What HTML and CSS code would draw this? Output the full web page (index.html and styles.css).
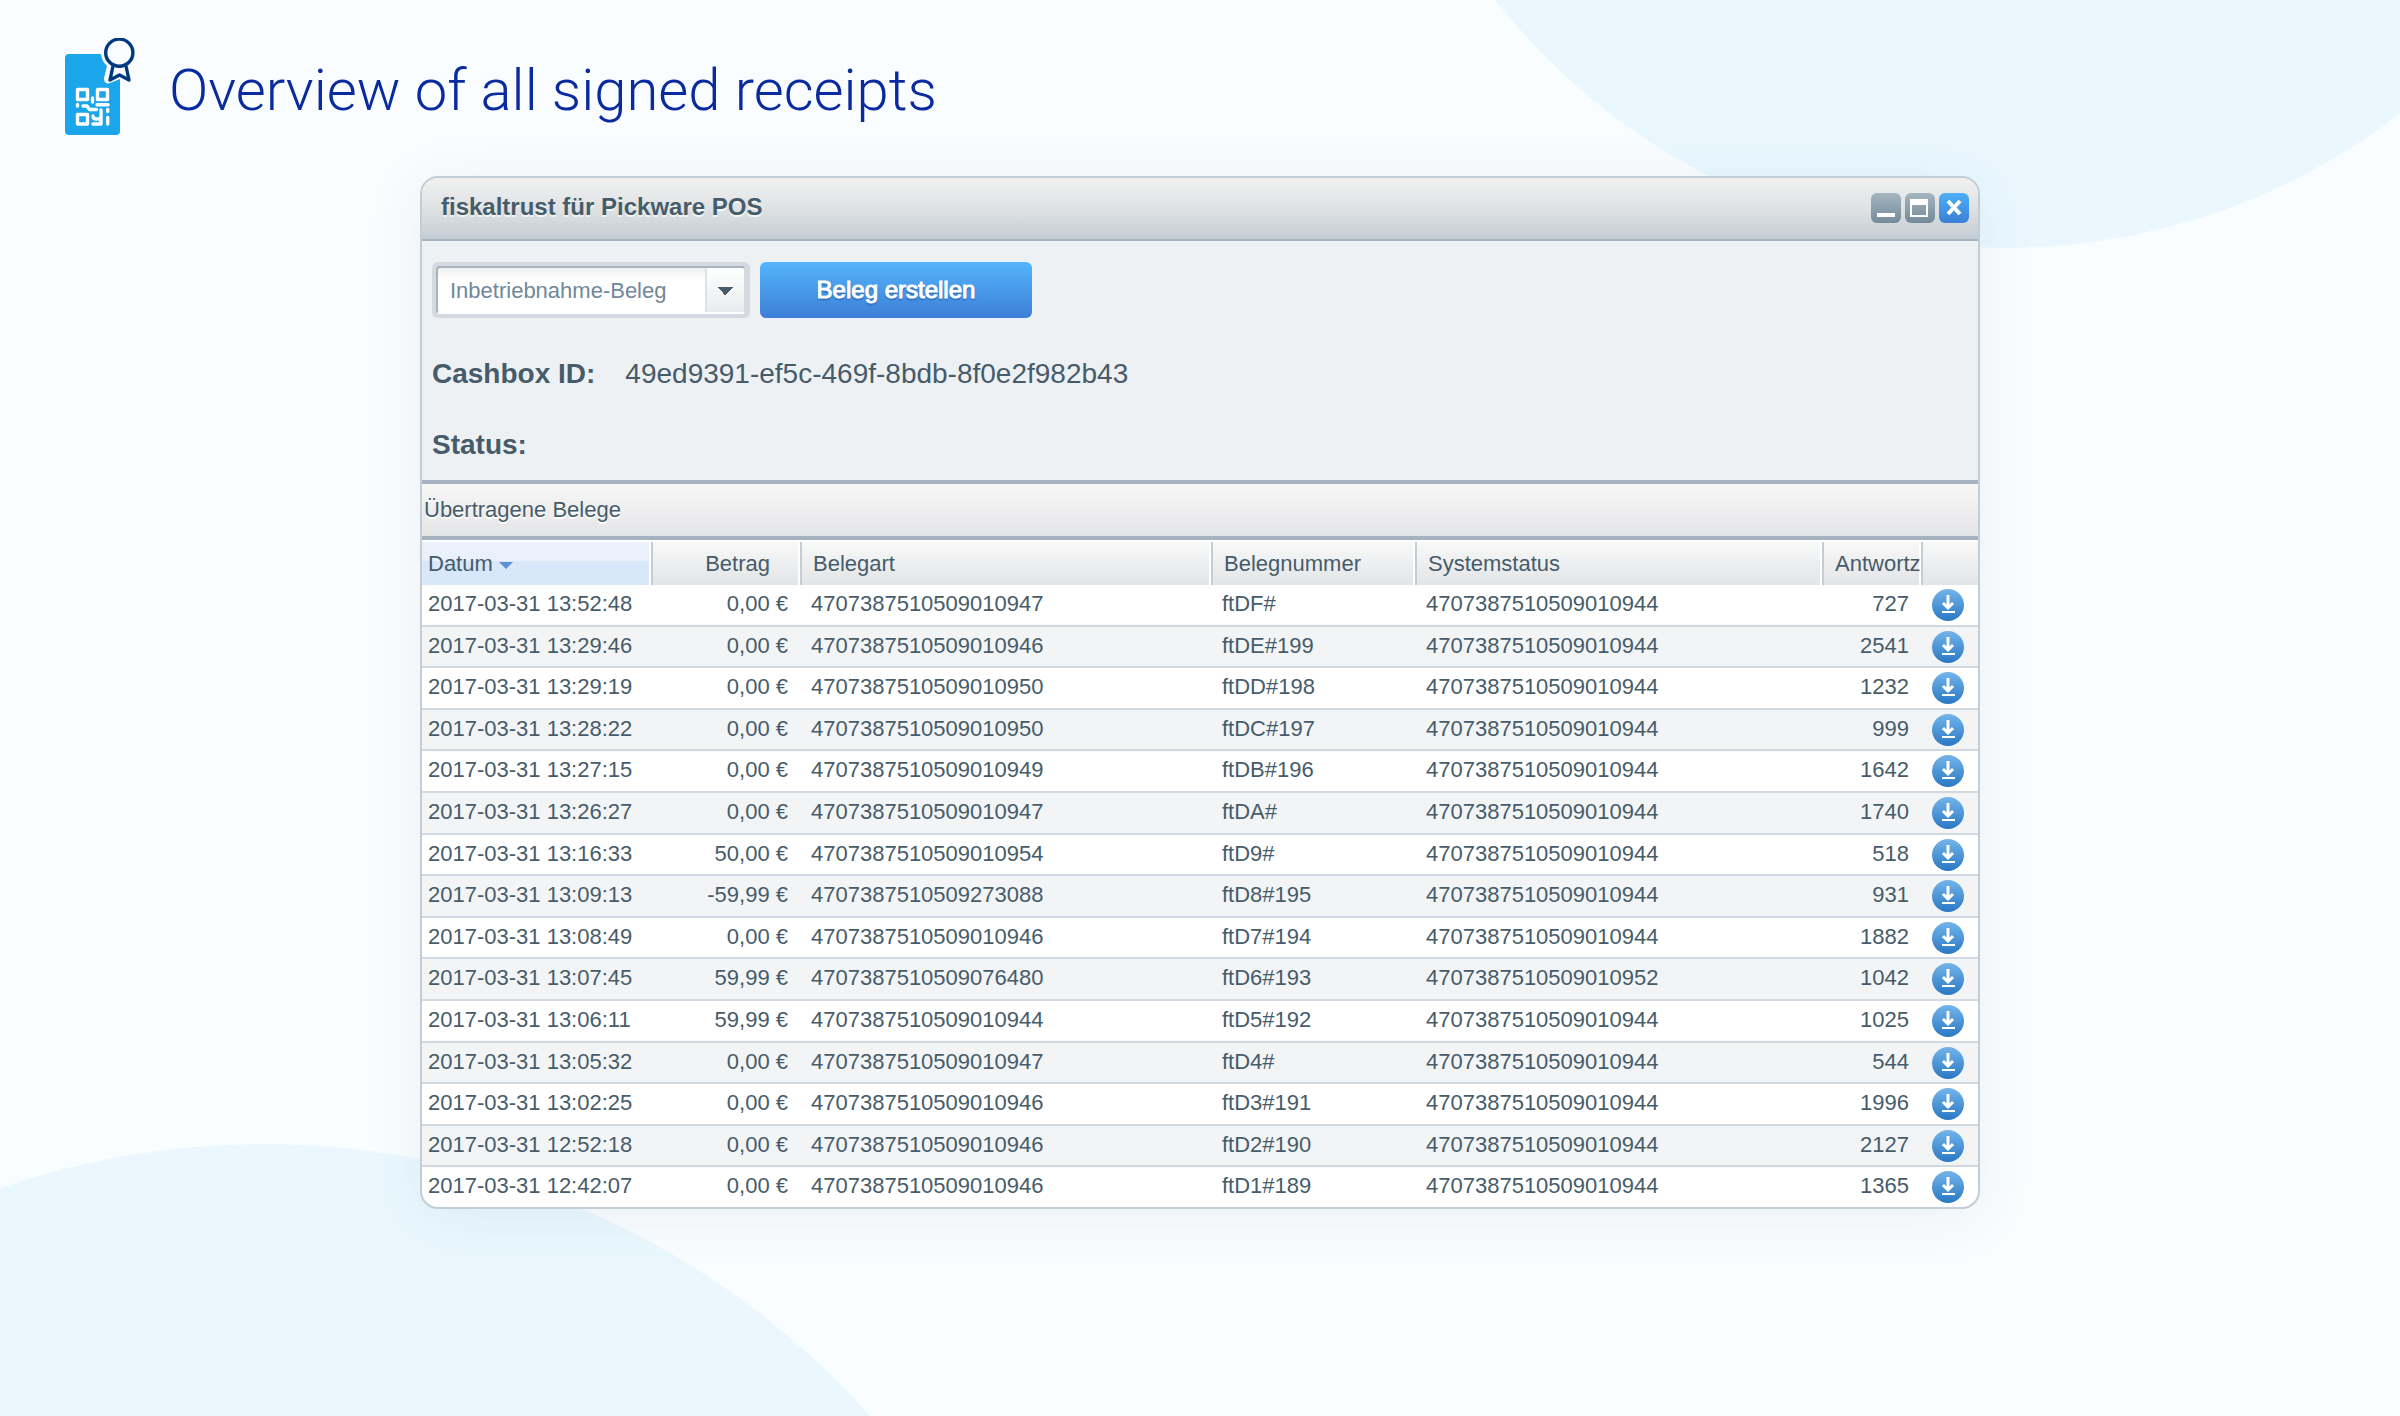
FILE: index.html
```html
<!DOCTYPE html>
<html lang="en">
<head>
<meta charset="utf-8">
<title>Overview of all signed receipts</title>
<link rel="stylesheet" href="styles.css">
</head>
<body>
<div class="backdrop" aria-hidden="true"><span class="blob blob-top"></span><span class="blob blob-bottom"></span></div>
<svg class="sprite" aria-hidden="true">
  <linearGradient id="disc" x1="0" y1="0" x2="0" y2="1"><stop offset="0" stop-color="#73b5ea"/><stop offset="1" stop-color="#2a78c4"/></linearGradient>
  <symbol id="download" viewBox="0 0 32 32">
    <circle cx="16" cy="16" r="16" fill="url(#disc)"/>
    <path d="M16 6v12M11 14l5 5 5-5" fill="none" stroke="#fff" stroke-width="3"/>
    <path d="M10 23h13" stroke="#fff" stroke-width="2"/>
  </symbol>
</svg>
<header class="page-head">
  <svg class="logo" viewBox="0 0 72 100" aria-hidden="true">
    <path d="M4 16h32a19 19 0 0 0 6 12l-3 12q0 7 6 5l10-4v52a4 4 0 0 1-4 4H4a4 4 0 0 1-4-4V20a4 4 0 0 1 4-4z" fill="#1ba5eb"/>
    <g fill="none" stroke="#003a7d" stroke-width="3.4" stroke-linejoin="round"><circle cx="54.3" cy="14.7" r="13.6"/><path d="M48 28l-3 14 9.500-5 9.500 5-3-14"/></g>
    <g fill="none" stroke="#fff" stroke-width="3.4" stroke-linecap="round" stroke-linejoin="round">
      <path d="M12.500 51.500h10v10h-10zM32.500 51.500h10v10h-10zM12.500 76.500h10v9.500h-10zM27.500 60v4M12.500 66.500v1.500M32 66.700h11M18 68h4l2.500 3.500h7M28 78q0 3 3 3h5M36 72v14h-8M42.700 71.500v2M42.700 79.500v6.500"/>
    </g>
  </svg>
  <h1>Overview of all signed receipts</h1>
</header>
<main class="window">
  <div class="titlebar">
    <h2>fiskaltrust für Pickware POS</h2>
    <div class="controls">
      <button type="button" aria-label="Minimize"><svg viewBox="0 0 30 30"><path d="M6 22h18" stroke="#fff" stroke-width="4"/></svg></button>
      <button type="button" aria-label="Maximize"><svg viewBox="0 0 30 30"><path d="M5 6h18v18H5zm2 6v10h14V12z" fill="#fff" fill-rule="evenodd"/></svg></button>
      <button type="button" class="close" aria-label="Close"><svg viewBox="0 0 30 30"><path d="M9 8l12 13M21 8L9 21" stroke="#fff" stroke-width="4"/></svg></button>
    </div>
  </div>
  <section class="panel">
    <form class="actions">
      <div class="combo">
        <select aria-label="Belegtyp"><option>Inbetriebnahme-Beleg</option></select>
      </div>
      <button type="button" class="primary">Beleg erstellen</button>
    </form>
    <dl class="facts">
      <div><dt>Cashbox ID:</dt><dd>49ed9391-ef5c-469f-8bdb-8f0e2f982b43</dd></div>
      <div><dt>Status:</dt><dd></dd></div>
    </dl>
  </section>
  <h3 class="strip" id="caption">Übertragene Belege</h3>
  <table class="receipts" aria-labelledby="caption">
    <colgroup><col class="c-date"><col class="c-sum"><col class="c-kind"><col class="c-no"><col><col class="c-ans"><col class="c-dl"></colgroup>
    <thead><tr><th class="sorted">Datum <i class="arrow"></i></th><th class="num">Betrag</th><th>Belegart</th><th>Belegnummer</th><th>Systemstatus</th><th class="cut">Antwortz</th><th></th></tr></thead>
    <tbody id="rows"></tbody>
  </table>
</main>
<script src="rows.js"></script>
</body>
</html>
```
FILE: rows.js
```js
const receipts = [
  ["13:52:48", "0,00", "4707387510509010947", "ftDF#", "4707387510509010944", 727],
  ["13:29:46", "0,00", "4707387510509010946", "ftDE#199", "4707387510509010944", 2541],
  ["13:29:19", "0,00", "4707387510509010950", "ftDD#198", "4707387510509010944", 1232],
  ["13:28:22", "0,00", "4707387510509010950", "ftDC#197", "4707387510509010944", 999],
  ["13:27:15", "0,00", "4707387510509010949", "ftDB#196", "4707387510509010944", 1642],
  ["13:26:27", "0,00", "4707387510509010947", "ftDA#", "4707387510509010944", 1740],
  ["13:16:33", "50,00", "4707387510509010954", "ftD9#", "4707387510509010944", 518],
  ["13:09:13", "-59,99", "4707387510509273088", "ftD8#195", "4707387510509010944", 931],
  ["13:08:49", "0,00", "4707387510509010946", "ftD7#194", "4707387510509010944", 1882],
  ["13:07:45", "59,99", "4707387510509076480", "ftD6#193", "4707387510509010952", 1042],
  ["13:06:11", "59,99", "4707387510509010944", "ftD5#192", "4707387510509010944", 1025],
  ["13:05:32", "0,00", "4707387510509010947", "ftD4#", "4707387510509010944", 544],
  ["13:02:25", "0,00", "4707387510509010946", "ftD3#191", "4707387510509010944", 1996],
  ["12:52:18", "0,00", "4707387510509010946", "ftD2#190", "4707387510509010944", 2127],
  ["12:42:07", "0,00", "4707387510509010946", "ftD1#189", "4707387510509010944", 1365]
];
document.getElementById("rows").innerHTML = receipts.map(([time, sum, kind, no, status, answer]) =>
  `<tr><td>2017-03-31 ${time}</td><td class="num">${sum} €</td><td>${kind}</td><td>${no}</td><td>${status}</td><td class="num">${answer}</td>` +
  `<td class="dl"><a href="#${encodeURIComponent(no)}" aria-label="Download"><svg><use href="#download"/></svg></a></td></tr>`
).join("");
```
FILE: styles.css
```css
* { box-sizing: border-box; }
body {
  margin: 0;
  min-height: 100vh;
  background: #fafdff;
  color: #475c6a;
  font-family: "Liberation Sans", Arial, sans-serif;
  font-size: 22px;
}
h1, h2, h3, dl, dd { margin: 0; }
button { border: 0; padding: 0; font: inherit; }
.sprite { position: absolute; width: 0; height: 0; }
.backdrop { position: absolute; inset: 0; overflow: hidden; z-index: -1; }
.blob { position: absolute; border-radius: 50%; background: #eaf8fe; }
.blob-top { width: 1296px; height: 1296px; right: -253px; top: -1048px; }
.blob-bottom { width: 1622px; height: 1622px; left: -547px; top: 1144px; }

.page-head { display: flex; align-items: center; gap: 32px; height: 176px; padding: 0 65px; }
.logo { width: 72px; height: 100px; }
.page-head h1 { padding-top: 4px; font: 300 58px/72px Roboto, sans-serif; color: #0a2aa0; }

.window {
  width: 65%;
  margin: 0 auto;
  border: 2px solid #c3cdd5;
  border-radius: 18px;
  background: #fff;
  overflow: hidden;
  box-shadow: 0 8px 60px rgba(60, 90, 120, .08);
}
.titlebar {
  display: flex;
  justify-content: space-between;
  height: 63px;
  padding: 15px 9px 0 19px;
  border-bottom: 2px solid #a4b3bf;
  background: linear-gradient(#f0f0f0, #dfe2e4 50%, #c4ccd4);
}
.titlebar h2 { font-size: 24px; line-height: 28px; text-shadow: 0 2px 0 #f4f6f7; }
.controls { display: flex; gap: 4px; }
.controls button { width: 30px; height: 30px; border-radius: 6px; background: linear-gradient(#a5b5bf, #748b99); }
.controls .close { background: linear-gradient(#4db0f8, #3c7fd6); }
.controls svg { display: block; width: 30px; height: 30px; fill: none; }

.panel { height: 239px; padding: 21px 10px 0; background: #edf1f4; }
.actions { display: flex; gap: 10px; }
.combo { width: 318px; height: 56px; padding: 4px; border-radius: 6px; background: #d5dae1; }
.combo select {
  appearance: none;
  width: 100%;
  height: 48px;
  padding: 2px 12px 0;
  border: 2px solid #a9b4bd;
  border-right-color: #d5dae1;
  border-bottom-color: #fff;
  border-radius: 4px;
  color: #71889a;
  font: 22px/26px "Liberation Sans", Arial, sans-serif;
  background:
    conic-gradient(from -45deg at 50% 100%, #475c6a 90deg, transparent 0) right 11px top 19px / 16px 8px no-repeat,
    linear-gradient(#fff, #e9ecee) right / 37px 100% no-repeat,
    linear-gradient(#dde2e6, #dde2e6) right 37px top / 2px 100% no-repeat,
    linear-gradient(#eff1f2, #fff 30%);
}
.primary {
  width: 272px;
  height: 56px;
  border-radius: 6px;
  background: linear-gradient(#54b4fb, #3c7fd6);
  color: #fff;
  font-size: 24px;
  -webkit-text-stroke: 1px #fff;
  text-shadow: 0 2px 2px #2b62a8;
}
.facts { padding-top: 40px; font-size: 28px; line-height: 32px; }
.facts div { display: flex; gap: 30px; margin-bottom: 39px; }
.facts dt { font-weight: bold; }

.strip {
  height: 60px;
  padding: 0 2px;
  border: solid #a4b3bf;
  border-width: 4px 0;
  background: linear-gradient(#f7f7f7, #e4e5e7);
  font-size: 22px;
  font-weight: normal;
  line-height: 52px;
  text-shadow: 0 2px 0 #fff;
}

.receipts { width: 100%; table-layout: fixed; border-collapse: separate; border-spacing: 0; border-top: 2px solid #fff; }
.c-date { width: 229px; }
.c-sum { width: 149px; }
.c-kind { width: 411px; }
.c-no { width: 204px; }
.c-ans { width: 99px; }
.c-dl { width: 57px; }
.receipts th {
  height: 43px;
  padding: 0 11px;
  border-left: 2px solid #c5cdd4;
  box-shadow: inset -2px 0 0 #fff;
  background: linear-gradient(#f9f9f9, #e3e4e7);
  font-weight: normal;
  text-align: left;
  white-space: nowrap;
}
.receipts th:last-child { box-shadow: none; }
.receipts .sorted { padding-left: 6px; border-left: 0; background: linear-gradient(#eaf1fc 45%, #d9e7fb 45%); }
.receipts th.num { padding-right: 30px; }
.receipts th.cut { padding-right: 0; overflow: hidden; }
.receipts .num { text-align: right; }
.arrow { display: inline-block; border: 7px solid transparent; border-top-color: #5c91d3; border-bottom: 0; vertical-align: 2px; }
.receipts td { height: 42px; padding: 0 12px 2px 11px; border-bottom: 2px solid #d2d8df; line-height: 26px; white-space: nowrap; }
.receipts td:first-child { padding-left: 6px; }
.receipts tbody tr:nth-child(5n+2) td, .receipts tbody tr:nth-child(5n+4) td { height: 41px; }
.receipts tbody tr:nth-child(even) { background: #f2f4f6; }
.receipts tbody tr:last-child td { height: 40px; border-bottom: 0; }
.receipts td.dl { padding: 0 0 0 11px; }
.dl a, .dl svg { display: block; width: 32px; height: 32px; }
```
